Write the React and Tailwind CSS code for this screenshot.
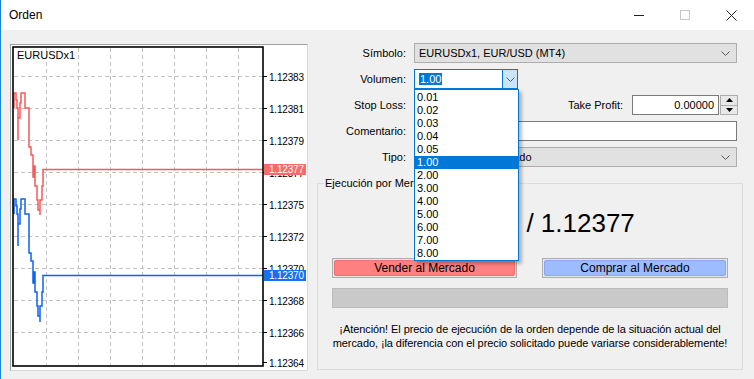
import React from "react";

const Chev = () => (
  <svg width="9" height="5" viewBox="0 0 9 5">
    <polyline points="0.5,0.5 4.5,4.5 8.5,0.5" fill="none" stroke="#5a5a5a" strokeWidth="1" />
  </svg>
);

const redPath =
  "M14,108 V93 H16 V100 H17 V108 H18 V140 V118 H20 V103 H21 V93 H25 V108 H29 V147 H31 V155 H33 V177 H34 V166 H35 V186 H37 V200 H38 V210 H40 V215 V200 H42 V186 H43 V169.5 H263";
const bluePath =
  "M14,214 V199 H16 V206 H17 V214 H18 V246 V224 H20 V209 H21 V199 H25 V214 H29 V253 H31 V261 H33 V283 H34 V272 H35 V292 H37 V306 H38 V316 H40 V322 V306 H42 V292 H43 V275.5 H263";

function Chart() {
  const vx = [46.5, 78.5, 110.5, 142.5, 174.5, 206.5, 238.5];
  const hy = [76.5, 108.5, 140.5, 172.5, 204.5, 236.5, 268.5, 300.5, 332.5];
  const labels = [
    ["1.12383", 76.5],
    ["1.12381", 108.5],
    ["1.12379", 140.5],
    ["1.12377", 172.5],
    ["1.12375", 204.5],
    ["1.12372", 236.5],
    ["1.12370", 268.5],
    ["1.12368", 300.5],
    ["1.12366", 332.5],
    ["1.12364", 362.5],
  ];
  return (
    <svg width="296" height="325" viewBox="11 45 296 325" className="block">
      <rect x="11" y="45" width="296" height="325" fill="#fff" />
      {vx.map((x) => (
        <line key={x} x1={x} y1="48" x2={x} y2="365" stroke="#c4c4c4" strokeDasharray="4 3" />
      ))}
      {hy.map((y) => (
        <line key={y} x1="14" y1={y} x2="262" y2={y} stroke="#c4c4c4" strokeDasharray="4 3" />
      ))}
      {labels.map(([t, y]) => (
        <g key={t}>
          <line x1="263" y1={y} x2="267" y2={y} stroke="#000" />
          <text x="269" y={y + 4} fontSize="10" fill="#000" fontFamily="Liberation Sans, Arial, sans-serif" letterSpacing="-0.2">
            {t}
          </text>
        </g>
      ))}
      <path d={redPath} fill="none" stroke="#f85858" strokeWidth="1.5" />
      <path d={bluePath} fill="none" stroke="#0f62f0" strokeWidth="1.5" />
      <rect x="13" y="47" width="250" height="319" fill="none" stroke="#000" strokeWidth="1.6" />
      <text x="17" y="59" fontSize="11" fill="#000" fontFamily="Liberation Sans, Arial, sans-serif">
        EURUSDx1
      </text>
      <rect x="264" y="164" width="42" height="11" fill="#fa6a6a" />
      <text x="269" y="173" fontSize="10" fill="#fff" fontFamily="Liberation Sans, Arial, sans-serif" letterSpacing="-0.2">
        1.12377
      </text>
      <rect x="264" y="270" width="42" height="11" fill="#1670f5" />
      <text x="269" y="279" fontSize="10" fill="#fff" fontFamily="Liberation Sans, Arial, sans-serif" letterSpacing="-0.2">
        1.12370
      </text>
    </svg>
  );
}

const items = ["0.01", "0.02", "0.03", "0.04", "0.05", "1.00", "2.00", "3.00", "4.00", "5.00", "6.00", "7.00", "8.00"];

function Label({ children }) {
  return <div className="w-[98px] text-right shrink-0 mr-[8px]">{children}</div>;
}

export default function App() {
  return (
    <div className="w-[754px] h-[379px] bg-[#f0f0f0] border-l border-[#1883d7] font-['Liberation_Sans',Arial,sans-serif] text-[11px] text-black overflow-hidden flex flex-col">
      <div className="h-[30px] bg-white flex items-center shrink-0">
        <div className="pl-[8px] text-[12px] flex-1">Orden</div>
        <div className="w-[46px] h-[30px] flex items-center justify-center">
          <div className="w-[10px] h-[1px] bg-[#222]" />
        </div>
        <div className="w-[46px] h-[30px] flex items-center justify-center">
          <div className="w-[10px] h-[10px] border border-[#c8c8c8]" />
        </div>
        <div className="w-[46px] h-[30px] flex items-center justify-center">
          <svg width="11" height="11" viewBox="0 0 11 11">
            <path d="M0.5,0.5 L10.5,10.5 M10.5,0.5 L0.5,10.5" stroke="#222" strokeWidth="1" />
          </svg>
        </div>
      </div>

      <div className="flex flex-1">
        <div className="ml-[9px] mt-[14px] w-[298px] h-[327px] border border-t-[#a0a0a0] border-l-[#a0a0a0] border-r-[#dadada] border-b-[#dadada] shrink-0">
          <Chart />
        </div>

        <div className="flex-1 flex flex-col pt-[13px]">
          <div className="flex items-center h-[20px]">
            <Label>Símbolo:</Label>
            <div className="w-[323px] h-[20px] border border-[#adadad] bg-[#e1e1e1] flex items-center pl-[4px] pr-[6px]">
              <span className="flex-1">EURUSDx1, EUR/USD (MT4)</span>
              <Chev />
            </div>
          </div>

          <div className="flex items-center h-[20px] mt-[6px]">
            <Label>Volumen:</Label>
            <div className="relative w-[104px] h-[20px] border border-[#0078d7] bg-white flex items-center">
              <div className="flex-1 pl-[4px]">
                <span className="bg-[#0078d7] text-white px-[1px]">1.00</span>
              </div>
              <div className="w-[15px] h-full border-l border-[#0078d7] bg-[#cce4f7] flex items-center justify-center">
                <Chev />
              </div>
              <div className="absolute left-[-1px] top-[19px] w-[105px] h-[172px] pt-[1px] border border-[#0078d7] bg-white z-10 shadow-[3px_3px_3px_rgba(0,0,0,0.25)]">
                {items.map((it) => (
                  <div
                    key={it}
                    className={
                      it === "1.00"
                        ? "h-[13px] leading-[13px] pl-[2px] bg-[#0078d7] text-white"
                        : "h-[13px] leading-[13px] pl-[2px]"
                    }
                  >
                    {it}
                  </div>
                ))}
              </div>
            </div>
          </div>

          <div className="flex items-center h-[20px] mt-[6px]">
            <Label>Stop Loss:</Label>
            <div className="w-[104px] h-[20px] border border-[#7a7a7a] bg-white" />
            <div className="w-[105px] text-right">Take Profit:</div>
            <div className="ml-[9px] w-[87px] h-[20px] border border-[#7a7a7a] bg-white flex items-center justify-end pr-[4px]">
              0.00000
            </div>
            <div className="ml-[1px] w-[18px] h-[20px] border border-[#adadad] bg-[#e8e8e8] flex flex-col">
              <div className="flex-1 flex items-center justify-center border-b border-[#adadad]">
                <svg width="7" height="4" viewBox="0 0 7 4"><polygon points="0,4 3.5,0 7,4" fill="#000" /></svg>
              </div>
              <div className="flex-1 flex items-center justify-center">
                <svg width="7" height="4" viewBox="0 0 7 4"><polygon points="0,0 3.5,4 7,0" fill="#000" /></svg>
              </div>
            </div>
          </div>

          <div className="flex items-center h-[20px] mt-[6px]">
            <Label>Comentario:</Label>
            <div className="w-[323px] h-[20px] border border-[#7a7a7a] bg-white" />
          </div>

          <div className="flex items-center h-[20px] mt-[6px]">
            <Label>Tipo:</Label>
            <div className="w-[323px] h-[20px] border border-[#adadad] bg-[#e1e1e1] flex items-center pl-[4px] pr-[6px]">
              <span className="flex-1">Ejecución por Mercado</span>
              <Chev />
            </div>
          </div>

          <div className="relative mt-[16px] ml-[9px] w-[426px] h-[187px] border border-[#dcdcdc] flex flex-col">
            <span className="absolute left-[6px] top-[-8px] px-[1px] bg-[#f0f0f0] leading-[14px]">
              Ejecución por Mercado
            </span>
            <div className="mt-[24px] h-[30px] leading-[30px] text-center text-[26px]">1.12370 / 1.12377</div>
            <div className="mt-[20px] px-[14px] flex justify-between">
              <div className="w-[185px] h-[20px] border border-[#adadad] bg-[#e6e6e6] p-[1px]">
                <div className="w-full h-full bg-[#ff8080] rounded-[2px] border border-[#f07070] flex items-center justify-center text-[12px]">
                  Vender al Mercado
                </div>
              </div>
              <div className="w-[186px] h-[20px] border border-[#adadad] bg-[#e6e6e6] p-[1px]">
                <div className="w-full h-full bg-[#9dbcff] rounded-[2px] border border-[#86a8f5] flex items-center justify-center text-[12px]">
                  Comprar al Mercado
                </div>
              </div>
            </div>
            <div className="mt-[10px] mx-[14px] h-[20px] bg-[#c9c9c9] border border-[#bcbcbc]" />
            <div className="mt-[14px] text-center leading-[14px] text-[11px] tracking-[-0.08px]">
              ¡Atención! El precio de ejecución de la orden depende de la situación actual del
              <br />
              mercado, ¡la diferencia con el precio solicitado puede variarse considerablemente!
            </div>
          </div>
        </div>
      </div>
    </div>
  );
}
